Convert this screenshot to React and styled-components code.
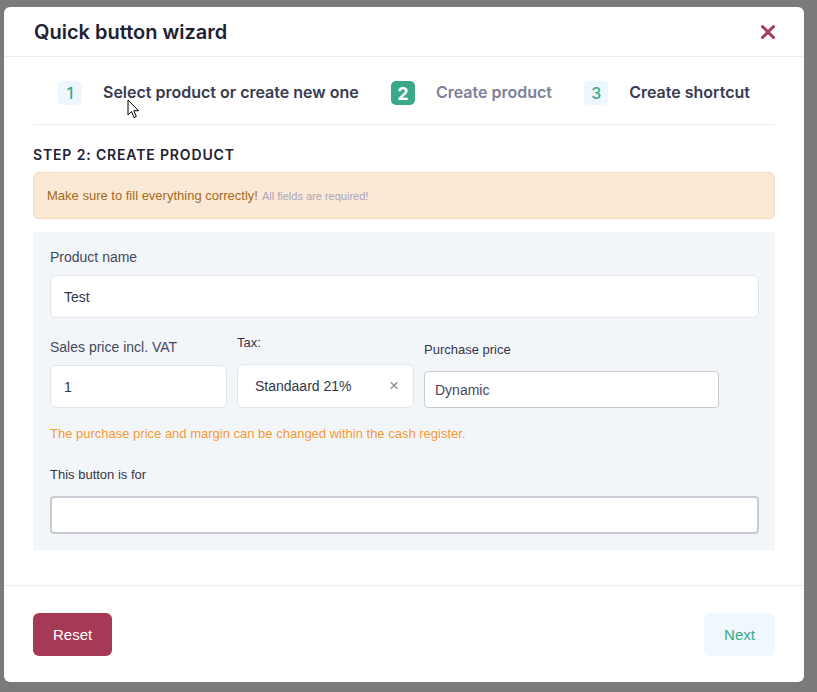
import React from 'react';
import styled, { createGlobalStyle } from 'styled-components';

const GlobalStyle = createGlobalStyle`
    html, body {
        margin: 0;
        padding: 0;
        background: #7a7a7a;
        font-family: "Liberation Sans", Arial, sans-serif;
    }
    * { box-sizing: border-box; }
`;

export default function App() {
    return (
        <>
            <GlobalStyle />
            <Backdrop>
                <Modal>
                    <Header>
                        <Title>Quick button wizard</Title>
                        <Close aria-label="close">
                            <svg width="16" height="16" viewBox="0 0 16 16">
                                <path d="M2.5 2.5 L13.5 13.5 M13.5 2.5 L2.5 13.5" stroke="#a63a55" strokeWidth="3" strokeLinecap="round" />
                            </svg>
                        </Close>
                    </Header>

                    <Steps>
                        <Step>
                            <Badge>1</Badge>
                            <StepLabel>Select product or create new one</StepLabel>
                        </Step>
                        <Step>
                            <Badge active>2</Badge>
                            <StepLabel active>Create product</StepLabel>
                        </Step>
                        <Step>
                            <Badge>3</Badge>
                            <StepLabel>Create shortcut</StepLabel>
                        </Step>
                    </Steps>

                    <Body>
                        <SectionTitle>Step 2: Create product</SectionTitle>
                        <Alert>
                            Make sure to fill everything correctly! <small>All fields are required!</small>
                        </Alert>

                        <Panel>
                            <Label>Product name</Label>
                            <Input value="Test" readOnly />

                            <Row>
                                <Field width="177px">
                                    <Label>Sales price incl. VAT</Label>
                                    <Input value="1" readOnly />
                                </Field>
                                <Field width="177px">
                                    <SmallLabel>Tax:</SmallLabel>
                                    <Select>
                                        <span>Standaard 21%</span>
                                        <Clear>×</Clear>
                                    </Select>
                                </Field>
                                <Field width="295px">
                                    <SmallLabel>Purchase price</SmallLabel>
                                    <PlainInput value="Dynamic" readOnly />
                                </Field>
                            </Row>

                            <Note>The purchase price and margin can be changed within the cash register.</Note>

                            <SmallLabel>This button is for</SmallLabel>
                            <PlainInput tall value="" readOnly />
                        </Panel>
                    </Body>

                    <Footer>
                        <Button variant="danger">Reset</Button>
                        <Button>Next</Button>
                    </Footer>

                    <Cursor width="13" height="20" viewBox="0 0 13 20">
                        <path d="M1 1 L1 16 L4.5 12.5 L7 18.5 L9.3 17.5 L6.8 11.7 L11.5 11.7 Z" fill="#fff" stroke="#000" strokeWidth="1" strokeLinejoin="round" />
                    </Cursor>
                </Modal>
            </Backdrop>
        </>
    );
}

const Backdrop = styled.div`
    width: 817px;
    height: 692px;
    padding: 7px 13px 10px 4px;
`;

const Modal = styled.div`
    position: relative;
    width: 800px;
    height: 675px;
    background: #fff;
    border-radius: 6px;
    display: flex;
    flex-direction: column;
`;

const Header = styled.div`
    height: 50px;
    display: flex;
    align-items: center;
    justify-content: space-between;
    padding: 0 28px 0 30px;
    border-bottom: 1px solid #ececf1;
`;

const Title = styled.h1`
    margin: 0;
    font-family: Inter, "Liberation Sans", sans-serif;
    font-size: 20px;
    font-weight: 600;
    color: #1e2033;
`;

const Close = styled.button`
    border: 0;
    background: none;
    padding: 0;
    display: flex;
    cursor: pointer;
`;

const Steps = styled.div`
    margin: 0 29px;
    height: 68px;
    display: flex;
    align-items: center;
    justify-content: space-between;
    padding: 5px 25px 0 25px;
    border-bottom: 1px solid #ececf1;
`;

const Step = styled.div`
    display: flex;
    align-items: center;
    gap: 21px;
`;

const Badge = styled.span`
    width: 24px;
    height: 24px;
    border-radius: 5px;
    display: flex;
    align-items: center;
    justify-content: center;
    font-family: Inter, "Liberation Sans", sans-serif;
    font-size: ${(p) => (p.active ? '18px' : '16px')};
    font-weight: ${(p) => (p.active ? 700 : 500)};
    background: ${(p) => (p.active ? '#3aa889' : '#eef7fc')};
    color: ${(p) => (p.active ? '#fff' : '#3aa889')};
`;

const StepLabel = styled.span`
    font-family: Inter, "Liberation Sans", sans-serif;
    font-size: 16px;
    font-weight: 600;
    color: ${(p) => (p.active ? '#7d8099' : '#383a50')};
    margin-top: -2px;
`;

const Body = styled.div`
    flex: 1;
    padding: 0 29px;
    border-bottom: 1px solid #ececf1;
`;

const SectionTitle = styled.h2`
    margin: 21px 0 9px;
    font-family: Inter, "Liberation Sans", sans-serif;
    font-size: 14px;
    font-weight: 600;
    letter-spacing: 0.85px;
    text-transform: uppercase;
    color: #1e2033;
    line-height: 17px;
`;

const Alert = styled.div`
    height: 47px;
    display: flex;
    align-items: center;
    gap: 4px;
    padding: 0 13px;
    background: #fbe9d6;
    border: 1px solid #f8dcbd;
    border-radius: 6px;
    font-size: 13px;
    color: #a5691c;

    small {
        font-size: 11px;
        color: #a8a5ba;
        margin-top: 1px;
    }
`;

const Panel = styled.div`
    margin-top: 13px;
    background: #f3f6f9;
    padding: 16px 16px 16px 17px;
    display: flex;
    flex-direction: column;
`;

const Label = styled.label`
    font-size: 14px;
    color: #45485b;
    line-height: 18px;
    margin-bottom: 9px;
`;

const SmallLabel = styled.label`
    font-size: 13px;
    color: #33364a;
    line-height: 16px;
    margin-bottom: 13px;
`;

const Input = styled.input`
    width: 100%;
    height: 43px;
    border: 1px solid #e3e6ee;
    border-radius: 6px;
    background: #fff;
    padding: 0 13px;
    font-family: "Liberation Sans", Arial, sans-serif;
    font-size: 14px;
    color: #33364a;
    outline: none;
`;

const PlainInput = styled.input`
    width: 100%;
    height: ${(p) => (p.tall ? '38px' : '37px')};
    border: ${(p) => (p.tall ? '2px' : '1px')} solid #c9cbd4;
    border-radius: 4px;
    background: #fff;
    padding: 0 10px;
    font-family: "Liberation Sans", Arial, sans-serif;
    font-size: 14px;
    color: #44475a;
    outline: none;
`;

const Row = styled.div`
    display: flex;
    align-items: flex-end;
    gap: 10px;
    margin-top: 17px;
`;

const Field = styled.div`
    width: ${(p) => p.width};
    display: flex;
    flex-direction: column;
`;

const Select = styled.div`
    height: 44px;
    display: flex;
    align-items: center;
    justify-content: space-between;
    padding: 0 14px 0 17px;
    background: #fff;
    border: 1px solid #e3e6ee;
    border-radius: 6px;
    font-size: 14px;
    color: #33364a;
`;

const Clear = styled.span`
    color: #8c8e9c;
    font-size: 17px;
    line-height: 1;
    margin-top: -2px;
`;

const Note = styled.p`
    margin: 18px 0 25px;
    font-size: 13px;
    line-height: 16px;
    color: #f39a33;
`;

const Footer = styled.div`
    height: 96px;
    display: flex;
    align-items: center;
    justify-content: space-between;
    padding: 0 29px;
`;

const Button = styled.button`
    height: 43px;
    padding: 0 20px;
    border: 0;
    border-radius: 6px;
    font-family: "Liberation Sans", Arial, sans-serif;
    font-size: 15px;
    cursor: pointer;
    background: ${(p) => (p.variant === 'danger' ? '#a63a55' : '#eef8fd')};
    color: ${(p) => (p.variant === 'danger' ? '#fff' : '#3aa889')};
    min-width: ${(p) => (p.variant === 'danger' ? '79px' : '71px')};
`;

const Cursor = styled.svg`
    position: absolute;
    left: 123px;
    top: 92px;
    pointer-events: none;
`;
